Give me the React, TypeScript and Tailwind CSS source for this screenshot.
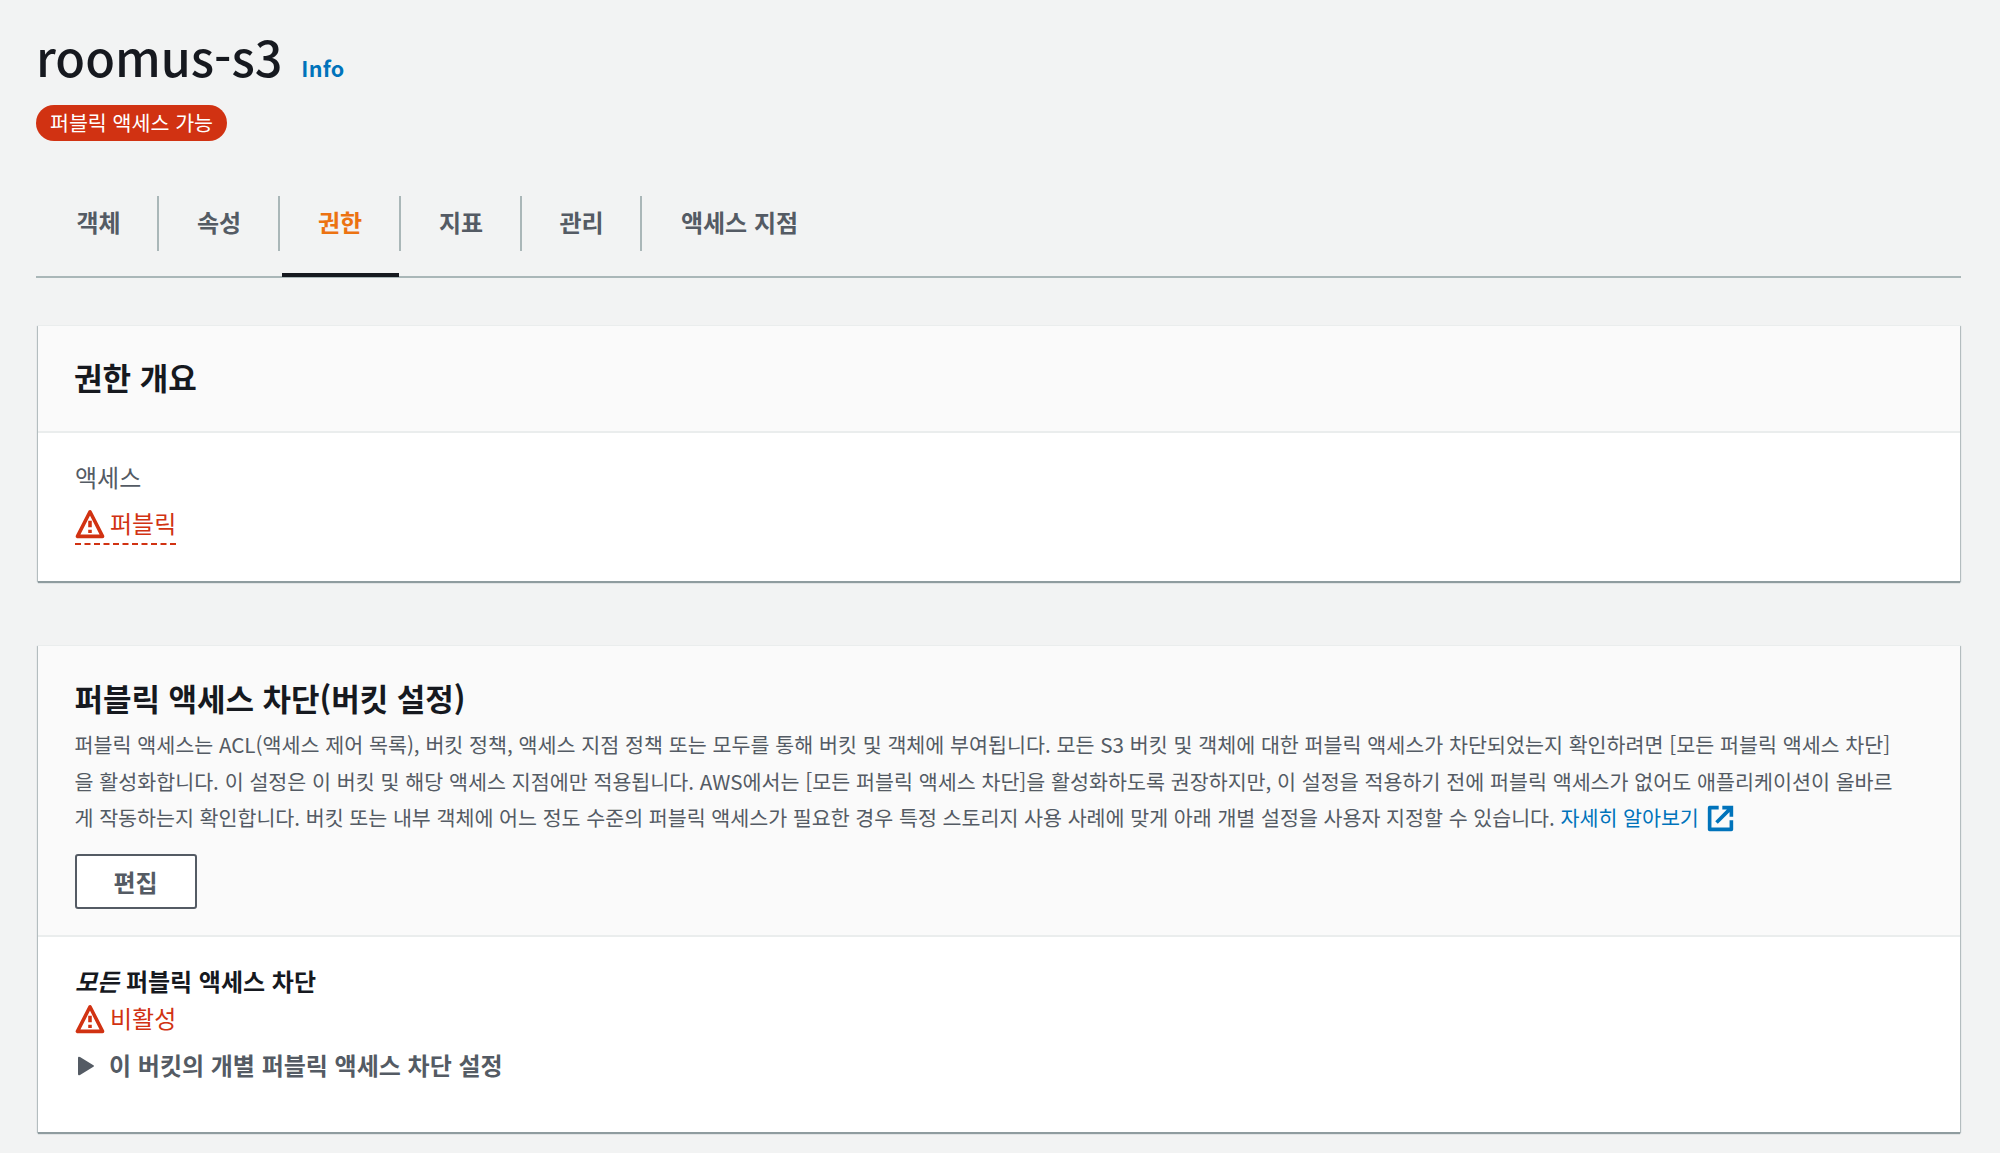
import type { ReactNode } from "react";

const FONT = "font-['Noto_Sans_CJK_KR','Noto_Sans',sans-serif]";

const tabs = [
  { id: "objects", label: "객체", cell: "w-[123px] pl-1" },
  { id: "properties", label: "속성", cell: "w-[121px] pl-px" },
  { id: "permissions", label: "권한", cell: "w-[121px] pl-px" },
  { id: "metrics", label: "지표", cell: "w-[121px] pl-px" },
  { id: "management", label: "관리", cell: "w-[120px] pl-px" },
  { id: "access-points", label: "액세스 지점", cell: "w-[194px] pl-px" },
];

function WarningIcon() {
  return (
    <svg className="mt-px size-[30px] shrink-0" viewBox="0 0 16 16" fill="none" stroke="currentColor" strokeWidth="1.9" strokeLinejoin="round">
      <path d="M8 1.5 1.3 14.6h13.4z" />
      <path d="M8 6.2v3.6M8 11v1.8" />
    </svg>
  );
}

function ExternalIcon() {
  return (
    <svg className="ml-[7px] inline-block size-[29px] align-[-7px]" viewBox="0 0 16 16" fill="none" stroke="currentColor" strokeWidth="2" strokeLinejoin="round">
      <path d="M7 2H2v12h12V9" />
      <path d="M9 2h5v5M14 2 5.8 10.2" strokeLinejoin="miter" />
    </svg>
  );
}

function Panel({ header, children }: { header: ReactNode; children: ReactNode }) {
  return (
    <section className="mr-px ml-0.5 border-t border-[#eaeded] bg-white shadow-[0_2px_1px_0_#8f9c9f,1px_1px_1px_0_#bcc5c6,-1px_1px_1px_0_#bcc5c6]">
      <div className="border-b-2 border-[#eaeded] bg-[#fafafa]">{header}</div>
      {children}
    </section>
  );
}

export default function App() {
  return (
    <main className={`${FONT} h-[1153px] w-[2000px] overflow-hidden bg-[#f2f3f3] pr-[39px] pl-9 text-2xl text-[#16191f]`} lang="ko">
      <header className="pt-[25px]">
        <div className="flex h-[62px] items-baseline">
          <h1 className="text-[48.5px] leading-[62px] font-medium">roomus-s3</h1>
          <a className="ml-[19px] text-[21.5px] font-bold tracking-[0.3px] text-[#0073bb]">Info</a>
        </div>
        <span className="mt-[18px] flex h-9 w-[191px] items-center justify-center rounded-full bg-[#d13212] text-[20.6px] text-white">
          퍼블릭 액세스 가능
        </span>
      </header>

      <nav className="mt-[55px] flex h-[82px] border-b-2 border-[#aab7b8] font-bold text-[#545b64]">
        {tabs.map((tab, i) => (
          <div key={tab.id} className={`${tab.cell} relative flex h-[55px] shrink-0 items-center justify-center pb-1 ${i < tabs.length - 1 ? "border-r-2 border-[#aab7b8]" : ""} ${tab.id === "permissions" ? "text-[#ec7211]" : ""}`}>
            {tab.label}
            {tab.id === "permissions" && <span className="absolute top-[77px] left-[2px] h-1 w-[117px] bg-[#16191f]" />}
          </div>
        ))}
      </nav>

      <div className="mt-[47px] flex flex-col gap-16">
        <Panel header={<h2 className="flex h-[105px] items-center px-9 pb-1 text-[31px] font-bold">권한 개요</h2>}>
          <div className="h-[148px] px-[37px] pt-[26px]">
            <div className="leading-9 text-[#545b64]">액세스</div>
            <div className="mt-[10px] inline-flex h-10 items-center gap-[5px] border-b-2 border-dashed border-[#d13212] pb-[2px] text-[#d13212]">
              <WarningIcon />
              퍼블릭
            </div>
          </div>
        </Panel>

        <Panel
          header={
            <div className="h-[289px] px-[36.5px] pt-8">
              <h2 className="text-[31px] leading-[40px] font-bold tracking-[-0.05px]">퍼블릭 액세스 차단(버킷 설정)</h2>
              <p className="mt-2 text-[20.63px] leading-[36.5px] whitespace-nowrap text-[#545b64]">
                퍼블릭 액세스는 ACL(액세스 제어 목록), 버킷 정책, 액세스 지점 정책 또는 모두를 통해 버킷 및 객체에 부여됩니다. 모든 S3 버킷 및 객체에 대한 퍼블릭 액세스가 차단되었는지 확인하려면 [모든 퍼블릭 액세스 차단]
                <br />
                을 활성화합니다. 이 설정은 이 버킷 및 해당 액세스 지점에만 적용됩니다. AWS에서는 [모든 퍼블릭 액세스 차단]을 활성화하도록 권장하지만, 이 설정을 적용하기 전에 퍼블릭 액세스가 없어도 애플리케이션이 올바르
                <br />
                <span className="tracking-[-0.04px]">
                  게 작동하는지 확인합니다. 버킷 또는 내부 객체에 어느 정도 수준의 퍼블릭 액세스가 필요한 경우 특정 스토리지 사용 사례에 맞게 아래 개별 설정을 사용자 지정할 수 있습니다.{" "}
                  <a className="text-[#0073bb]">
                    자세히 알아보기
                    <ExternalIcon />
                  </a>
                </span>
              </p>
              <button className="mt-[18.5px] flex h-[55px] w-[122px] items-center justify-center rounded-[3px] border-2 border-[#545b64] bg-white font-bold text-[#545b64]">
                편집
              </button>
            </div>
          }
        >
          <div className="h-[195px] px-[37px] pt-[26px]">
            <div className="leading-9 font-bold">
              <em>모든</em> 퍼블릭 액세스 차단
            </div>
            <div className="mt-px flex h-9 items-center gap-[5px] text-[#d13212]">
              <WarningIcon />
              비활성
            </div>
            <div className="mt-[11px] flex h-9 items-center font-bold text-[#545b64]">
              <svg className="mt-px mr-[14px] ml-[3px] h-5 w-[17px]" viewBox="0 0 17 20" fill="currentColor">
                <path d="M0 2Q0 0 2 1L15 9Q17 10 15 11L2 19Q0 20 0 18Z" />
              </svg>
              이 버킷의 개별 퍼블릭 액세스 차단 설정
            </div>
          </div>
        </Panel>
      </div>
    </main>
  );
}
